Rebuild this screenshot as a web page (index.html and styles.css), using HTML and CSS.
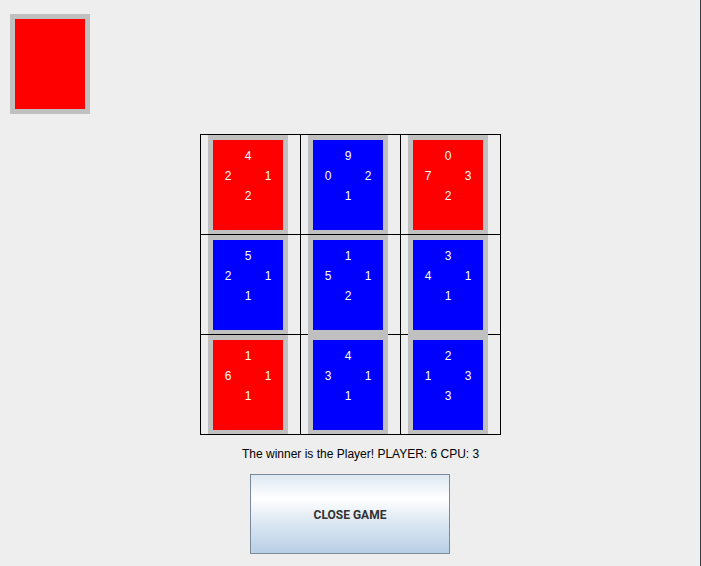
FILE: index.html
```html
<!DOCTYPE html>
<html lang="en">
<head>
<meta charset="utf-8">
<title>Card Game</title>
<link rel="stylesheet" href="styles.css">
</head>
<body>
<div class="deck"></div>
<main class="game">
  <div class="board">
    <div class="cell"><div class="card cpu"><span class="top">4</span><span class="left">2</span><span class="right">1</span><span class="bottom">2</span></div></div>
    <div class="cell"><div class="card player"><span class="top">9</span><span class="left">0</span><span class="right">2</span><span class="bottom">1</span></div></div>
    <div class="cell"><div class="card cpu"><span class="top">0</span><span class="left">7</span><span class="right">3</span><span class="bottom">2</span></div></div>
    <div class="cell"><div class="card player"><span class="top">5</span><span class="left">2</span><span class="right">1</span><span class="bottom">1</span></div></div>
    <div class="cell raised"><div class="card player"><span class="top">1</span><span class="left">5</span><span class="right">1</span><span class="bottom">2</span></div></div>
    <div class="cell raised"><div class="card player"><span class="top">3</span><span class="left">4</span><span class="right">1</span><span class="bottom">1</span></div></div>
    <div class="cell"><div class="card cpu"><span class="top">1</span><span class="left">6</span><span class="right">1</span><span class="bottom">1</span></div></div>
    <div class="cell"><div class="card player"><span class="top">4</span><span class="left">3</span><span class="right">1</span><span class="bottom">1</span></div></div>
    <div class="cell"><div class="card player"><span class="top">2</span><span class="left">1</span><span class="right">3</span><span class="bottom">3</span></div></div>
  </div>
  <p class="status">The winner is the Player! PLAYER: 6 CPU: 3</p>
  <button class="close" type="button">CLOSE GAME</button>
</main>
</body>
</html>
```
FILE: styles.css
```css
* {
  box-sizing: border-box;
}

body {
  margin: 0;
  min-height: 100vh;
  padding-top: 14px;
  background: #eeeeee;
  box-shadow: inset -1px 0 #3c3f41;
  color: #000000;
  font: 12px/20px "Liberation Sans", Arial, sans-serif;
}

.deck {
  width: 80px;
  height: 100px;
  margin-left: 10px;
  border: 5px solid #c0c0c0;
  background: #ff0000;
}

.game {
  width: max-content;
  margin: 20px auto 0;
}

.board {
  display: grid;
  grid-template-columns: repeat(3, 100px);
  grid-auto-rows: 100px;
  border: solid #000000;
  border-width: 0 1px 1px 0;
}

.cell {
  display: grid;
  padding-left: 7px;
  border: solid #000000;
  border-width: 1px 0 0 1px;
}

/* Cards drawn after the grid cover the line below them. */
.raised {
  z-index: 1;
}

.raised .card {
  margin-bottom: -1px;
  border-bottom-width: 5px;
}

.card {
  display: grid;
  grid-template: repeat(3, 20px) / repeat(3, 20px);
  grid-template-areas: ". top ." "left . right" ". bottom .";
  width: 80px;
  padding: 6px 5px 0;
  border: 5px solid #c0c0c0;
  border-bottom-width: 4px;
  color: #ffffff;
  text-align: center;
}

.cpu {
  background: #ff0000;
}

.player {
  background: #0000ff;
}

.top {
  grid-area: top;
}

.left {
  grid-area: left;
}

.right {
  grid-area: right;
}

.bottom {
  grid-area: bottom;
}

.status {
  margin: 9px 0 10px;
  padding-left: 42px;
}

.close {
  display: block;
  width: 200px;
  height: 80px;
  margin-left: 50px;
  padding: 2px 0 0;
  border: 1px solid #7a8a99;
  background: linear-gradient(#dde8f3, #ffffff 30%, #dde8f3 60%, #b8cfe5);
  color: #333333;
  font: bold 12px/20px Roboto, Arial, sans-serif;
}
```
